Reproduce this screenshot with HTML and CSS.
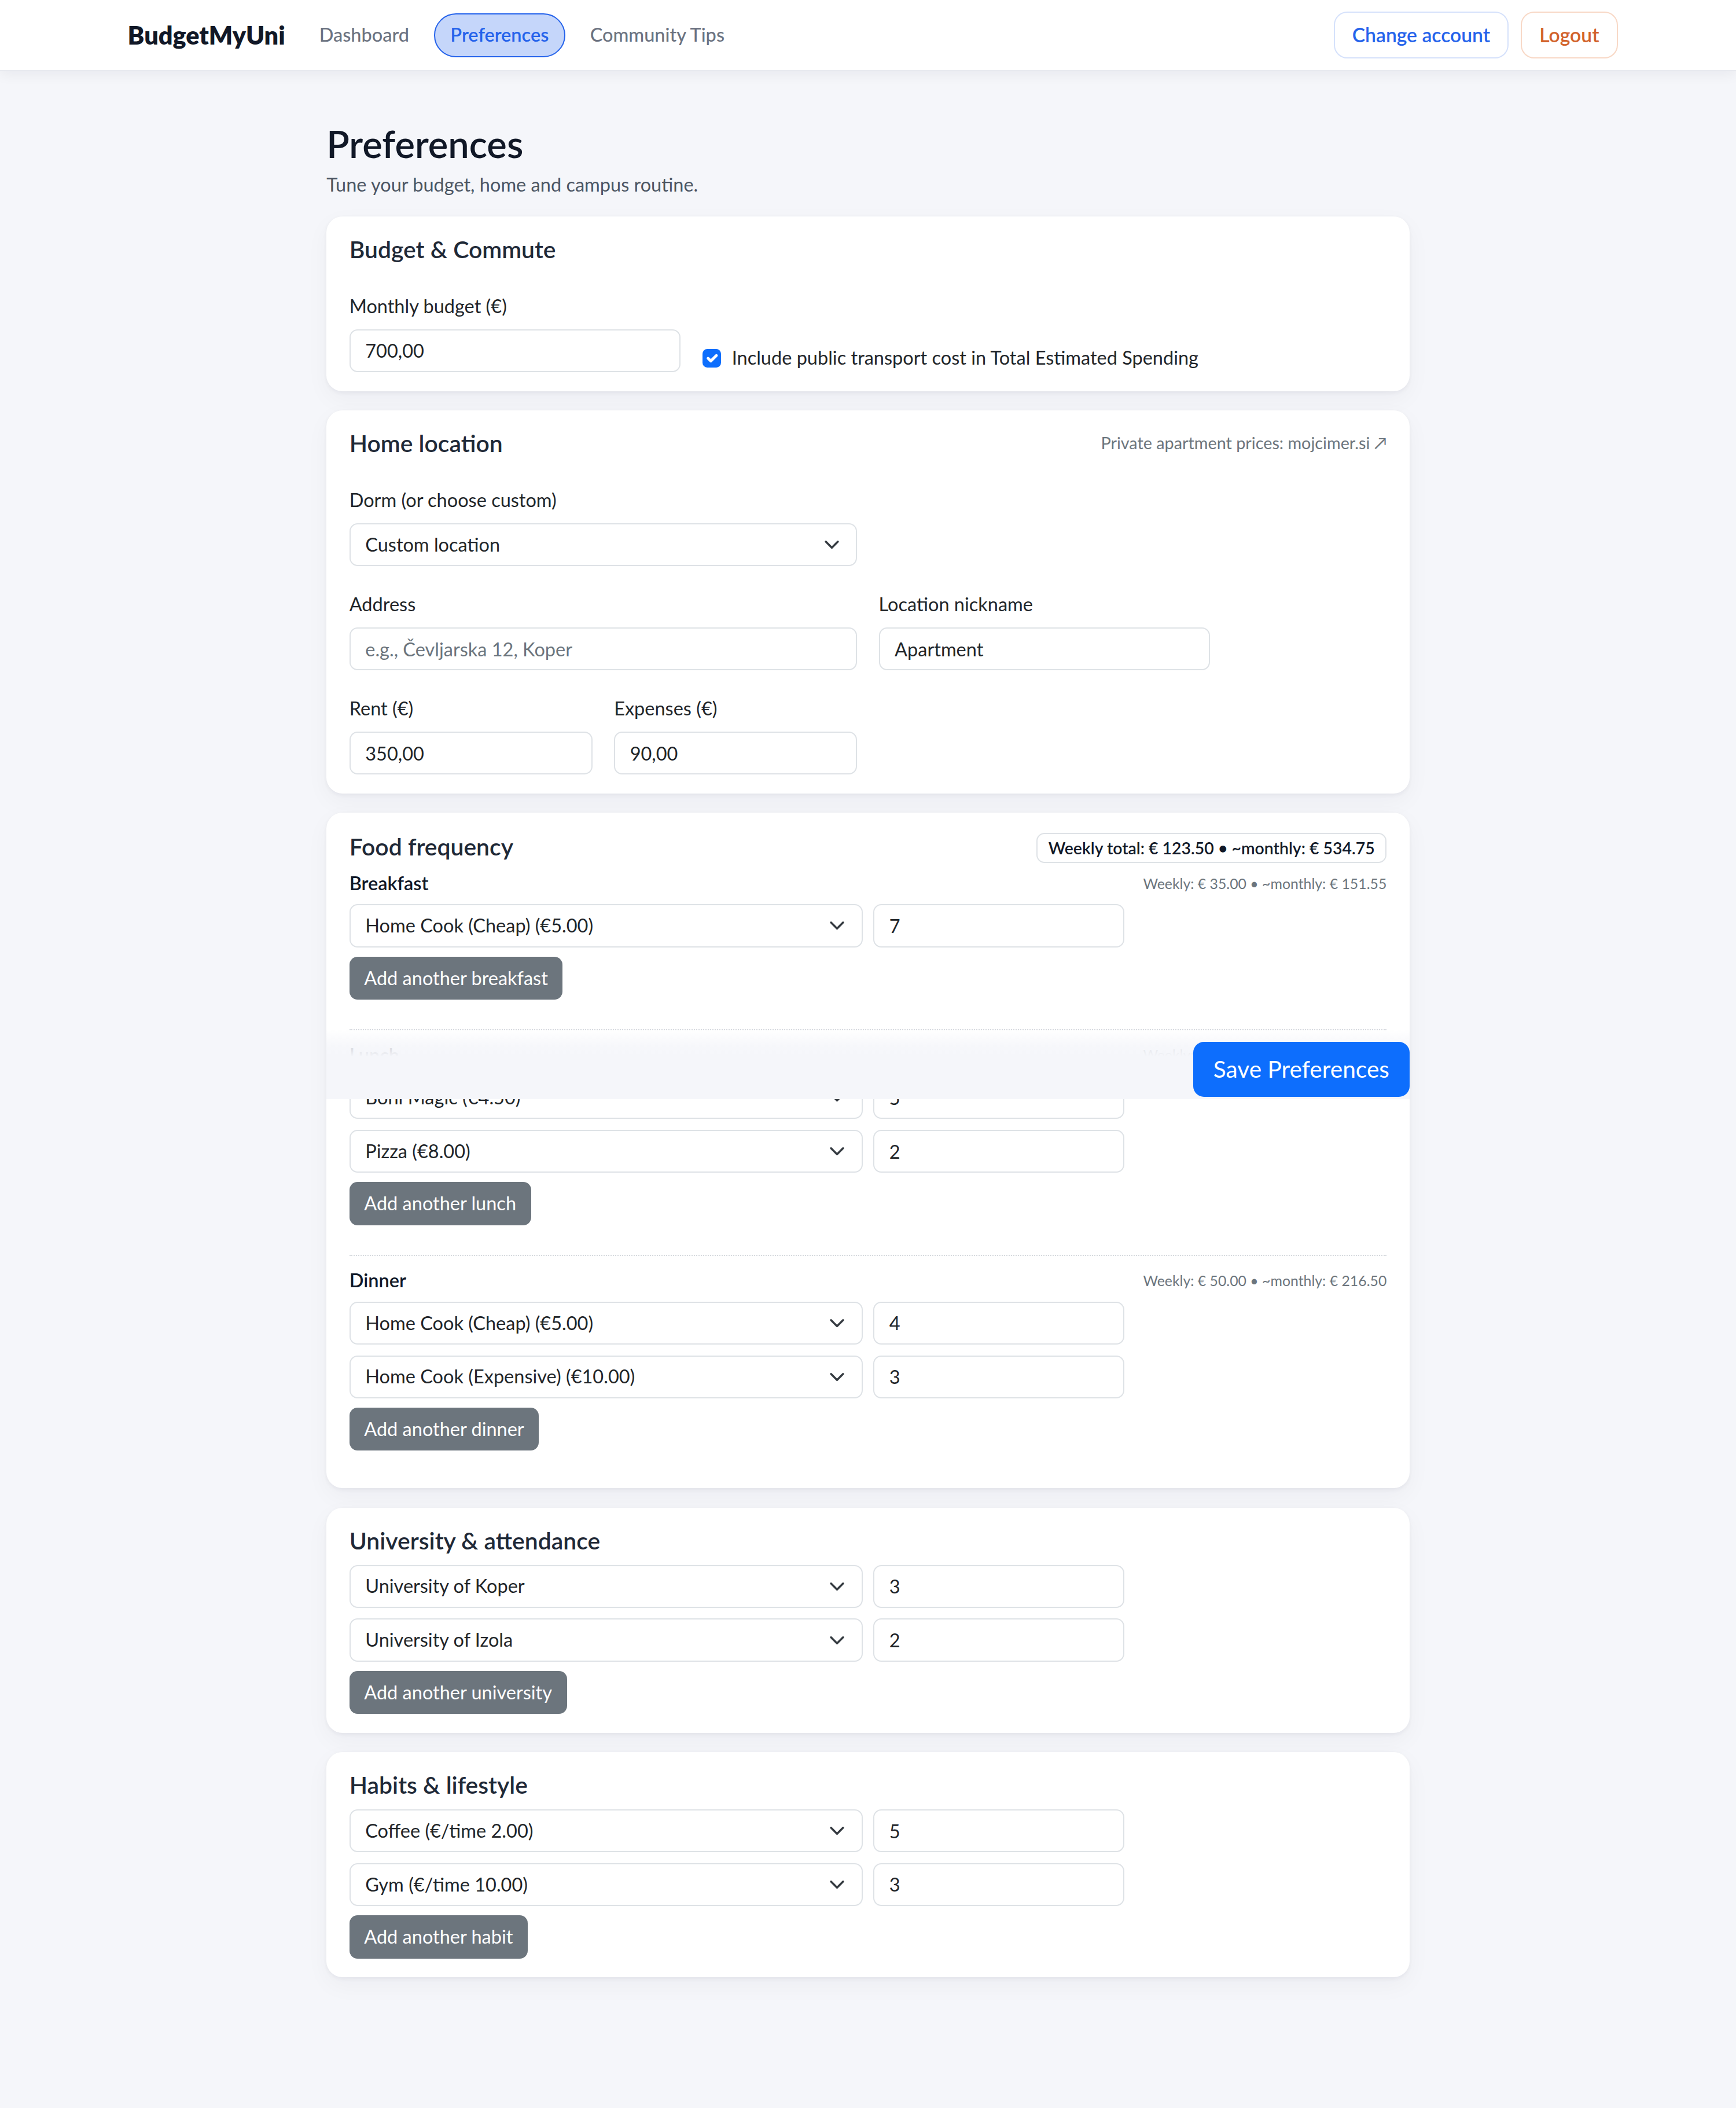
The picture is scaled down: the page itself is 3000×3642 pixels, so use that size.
FILE: index.html
```html
<!DOCTYPE html>
<html lang="en">
<head>
    <meta charset="UTF-8">
    <title>Preferences · BudgetMyUni</title>
    <link rel="stylesheet" href="styles.css">
</head>
<body>
<nav class="topbar">
    <a class="brand" href="#">BudgetMyUni</a>
    <ul class="nav-links">
        <li><a href="#">Dashboard</a></li>
        <li><a href="#" class="active">Preferences</a></li>
        <li><a href="#">Community Tips</a></li>
    </ul>
    <div class="nav-actions">
        <button class="btn-outline btn-account">Change account</button>
        <button class="btn-outline btn-logout">Logout</button>
    </div>
</nav>

<main class="page">
    <h1 class="page-title">Preferences</h1>
    <p class="page-sub">Tune your budget, home and campus routine.</p>

    <!-- budget -->
    <section class="card">
        <h2 class="card-title">Budget &amp; Commute</h2>
        <div class="field-row row-end">
            <div class="field span-4">
                <label>Monthly budget (€)</label>
                <input class="control" type="text" value="700,00">
            </div>
            <label class="check span-8">
                <input type="checkbox" checked>
                <span>Include public transport cost in Total Estimated Spending</span>
            </label>
        </div>
    </section>

    <!-- home -->
    <section class="card">
        <div class="card-head">
            <h2 class="card-title">Home location</h2>
            <a class="ext-link" href="#">Private apartment prices: mojcimer.si ↗</a>
        </div>
        <div class="field-row">
            <div class="field span-6">
                <label>Dorm (or choose custom)</label>
                <select class="control select">
                    <option>Custom location</option>
                </select>
            </div>
        </div>
        <div class="field-row">
            <div class="field span-6">
                <label>Address</label>
                <input class="control" type="text" placeholder="e.g., Čevljarska 12, Koper">
            </div>
            <div class="field span-4">
                <label>Location nickname</label>
                <input class="control" type="text" value="Apartment">
            </div>
        </div>
        <div class="field-row">
            <div class="field span-3">
                <label>Rent (€)</label>
                <input class="control" type="text" value="350,00">
            </div>
            <div class="field span-3">
                <label>Expenses (€)</label>
                <input class="control" type="text" value="90,00">
            </div>
        </div>
    </section>

    <!-- food -->
    <section class="card">
        <div class="card-head food-head">
            <h2 class="card-title">Food frequency</h2>
            <span class="total-badge">Weekly total: € 123.50 • ~monthly: € 534.75</span>
        </div>

        <div class="meal">
            <div class="meal-head">
                <strong>Breakfast</strong>
                <small>Weekly: € 35.00 • ~monthly: € 151.55</small>
            </div>
            <div class="item-row">
                <select class="control select"><option>Home Cook (Cheap) (€5.00)</option></select>
                <input class="control" type="text" value="7">
            </div>
            <button class="btn-add">Add another breakfast</button>
        </div>

        <div class="meal">
            <div class="meal-head">
                <strong>Lunch</strong>
                <small>Weekly: € 38.50 • ~monthly: € 166.71</small>
            </div>
            <div class="item-row">
                <select class="control select"><option>Boni Magic (€4.50)</option></select>
                <input class="control" type="text" value="5">
            </div>
            <div class="item-row">
                <select class="control select"><option>Pizza (€8.00)</option></select>
                <input class="control" type="text" value="2">
            </div>
            <button class="btn-add">Add another lunch</button>
        </div>

        <div class="meal">
            <div class="meal-head">
                <strong>Dinner</strong>
                <small>Weekly: € 50.00 • ~monthly: € 216.50</small>
            </div>
            <div class="item-row">
                <select class="control select"><option>Home Cook (Cheap) (€5.00)</option></select>
                <input class="control" type="text" value="4">
            </div>
            <div class="item-row">
                <select class="control select"><option>Home Cook (Expensive) (€10.00)</option></select>
                <input class="control" type="text" value="3">
            </div>
            <button class="btn-add">Add another dinner</button>
        </div>
    </section>

    <!-- university -->
    <section class="card">
        <h2 class="card-title">University &amp; attendance</h2>
        <div class="item-row">
            <select class="control select"><option>University of Koper</option></select>
            <input class="control" type="text" value="3">
        </div>
        <div class="item-row">
            <select class="control select"><option>University of Izola</option></select>
            <input class="control" type="text" value="2">
        </div>
        <button class="btn-add">Add another university</button>
    </section>

    <!-- habits -->
    <section class="card">
        <h2 class="card-title">Habits &amp; lifestyle</h2>
        <div class="item-row">
            <select class="control select"><option>Coffee (€/time 2.00)</option></select>
            <input class="control" type="text" value="5">
        </div>
        <div class="item-row">
            <select class="control select"><option>Gym (€/time 10.00)</option></select>
            <input class="control" type="text" value="3">
        </div>
        <button class="btn-add">Add another habit</button>
    </section>

    <div class="save-bar">
        <button class="btn-save">Save Preferences</button>
    </div>
</main>
</body>
</html>
```

FILE: styles.css
```css
*{
    box-sizing: border-box;
}
html{
    zoom: 2.322;
    background: #f5f6fa;
}
body{
    margin: 0;
    font-family: "Segoe UI", Lato, "Liberation Sans", sans-serif;
    font-size: 14px;
    line-height: 1.5;
    color: #212529;
}
button, input, select{
    font: inherit;
}

/* top navigation */
.topbar{
    height: 53px;
    display: flex;
    align-items: center;
    padding: 0 88px 0 95px;
    background: #fff;
    border-bottom: 1px solid #e8eaef;
    box-shadow: 0 2px 10px rgba(15,23,42,.06);
}
.brand{
    font-size: 18.6px;
    font-weight: 800;
    color: #111827;
    text-decoration: none;
}
.nav-links{
    list-style: none;
    display: flex;
    gap: 6px;
    margin: 0 0 0 13px;
    padding: 0;
}
.nav-links a{
    display: block;
    padding: 5px 11.5px;
    border: 1px solid transparent;
    border-radius: 999px;
    color: #6b7280;
    font-weight: 500;
    text-decoration: none;
}
.nav-links a.active{
    background: #c5d6fa;
    border-color: #2563eb;
    color: #2563eb;
    font-weight: 600;
}
.nav-actions{
    margin-left: auto;
    display: flex;
    gap: 9px;
}
.btn-outline{
    height: 35px;
    padding: 0 13px;
    background: #fff;
    border: 1px solid #d5e1fb;
    border-radius: 10px;
    font-size: 14.5px;
    font-weight: 600;
    color: #2563eb;
    cursor: pointer;
}
.btn-logout{
    border-color: #f8d8c6;
    color: #d2622a;
}

/* page */
.page{
    position: relative;
    max-width: 806px;
    margin: 0 auto;
    padding: 37px 0 97px;
}
.page-title{
    margin: 0 0 3.5px;
    font-size: 28px;
    line-height: 1.2;
    font-weight: 600;
    color: #111827;
}
.page-sub{
    margin: 0 0 13px;
    color: #4b5563;
}

.card{
    background: #fff;
    border-radius: 12px;
    padding: 14px 17px;
    margin-bottom: 14.5px;
    box-shadow: 0 1px 3px rgba(15,23,42,.05), 0 6px 18px rgba(15,23,42,.04);
}
.card-title{
    margin: 0 0 8px;
    font-size: 17.6px;
    line-height: 20.4px;
    font-weight: 600;
    color: #1f2937;
}
.card-head{
    display: flex;
    justify-content: space-between;
    align-items: center;
    margin-bottom: 8px;
}
.card-head .card-title{
    margin: 0;
}
.ext-link{
    font-size: 12.4px;
    color: #6c757d;
    text-decoration: none;
}

/* form grid, 12 columns */
.field-row{
    display: grid;
    grid-template-columns: repeat(12, 1fr);
    column-gap: 16px;
    margin-top: 18px;
}
.card-title + .field-row,
.card-head + .field-row{
    margin-top: 22px;
}
.row-end{
    align-items: end;
}
.span-3{ grid-column: span 3; }
.span-4{ grid-column: span 4; }
.span-6{ grid-column: span 6; }
.span-8{ grid-column: span 8; }

.field label{
    display: block;
    margin-bottom: 6.5px;
}
.control{
    display: block;
    width: 100%;
    height: 32px;
    padding: 0 11px;
    background: #fff;
    border: 1px solid #dee2e6;
    border-radius: 6px;
    color: #212529;
    outline: none;
}
.control::placeholder{
    color: #6c757d;
}
.select{
    appearance: none;
    -webkit-appearance: none;
    padding-right: 32px;
    background-image: url("data:image/svg+xml,%3csvg xmlns='http://www.w3.org/2000/svg' viewBox='0 0 16 16'%3e%3cpath fill='none' stroke='%23343a40' stroke-linecap='round' stroke-linejoin='round' stroke-width='2' d='m2 5 6 6 6-6'/%3e%3c/svg%3e");
    background-repeat: no-repeat;
    background-position: right 10px center;
    background-size: 16px 12px;
}

.check{
    display: flex;
    align-items: center;
    gap: 8px;
    line-height: 21px;
}
.check input{
    appearance: none;
    -webkit-appearance: none;
    width: 14px;
    height: 14px;
    margin: 0;
    border-radius: 3.5px;
    background: #0d6efd url("data:image/svg+xml,%3csvg xmlns='http://www.w3.org/2000/svg' viewBox='0 0 20 20'%3e%3cpath fill='none' stroke='%23fff' stroke-linecap='round' stroke-linejoin='round' stroke-width='3' d='m6 10 3 3 6-6'/%3e%3c/svg%3e") center / 100% no-repeat;
}

/* food / university / habit rows */
.food-head{
    margin-bottom: 4.5px;
}
.food-head .card-title{
    margin-top: -1px;
}
.total-badge{
    height: 22.5px;
    margin-top: 1px;
    padding: 0 8px;
    display: flex;
    align-items: center;
    border: 1px solid #dee2e6;
    border-radius: 6px;
    font-size: 12.25px;
    font-weight: 600;
    color: #111827;
}
.meal{
    margin-bottom: 22px;
}
.meal + .meal{
    border-top: 1px dotted #d6d9de;
    padding-top: 8px;
}
.meal:last-child{
    margin-bottom: 14px;
}
.meal-head{
    display: flex;
    justify-content: space-between;
    align-items: center;
    height: 21px;
    margin-bottom: 5px;
}
.meal-head strong{
    font-weight: 600;
    color: #111827;
}
.meal-head small{
    font-size: 10.7px;
    color: #6c757d;
}
.item-row{
    display: grid;
    grid-template-columns: calc(50% - 4px) calc(25% - 6px);
    column-gap: 8px;
}
.item-row + .item-row{
    margin-top: 8px;
}
.btn-add{
    display: block;
    height: 32px;
    margin-top: 7px;
    padding: 0 11px;
    background: #6c757d;
    border: 0;
    border-radius: 6px;
    color: #fff;
    cursor: pointer;
}

/* save bar, kept over the form */
.save-bar{
    position: absolute;
    left: 0;
    right: 0;
    top: 713px;
    height: 52px;
    padding-top: 9px;
    display: flex;
    justify-content: flex-end;
    align-items: flex-start;
    background: linear-gradient(to bottom, rgba(245,246,250,0) 0, rgba(245,246,250,.85) 12px, #f5f6fa 20px);
}
.btn-save{
    height: 41px;
    padding: 0 15px;
    background: #0d6efd;
    border: 0;
    border-radius: 8px;
    font-size: 17.5px;
    color: #fff;
    cursor: pointer;
}
```
